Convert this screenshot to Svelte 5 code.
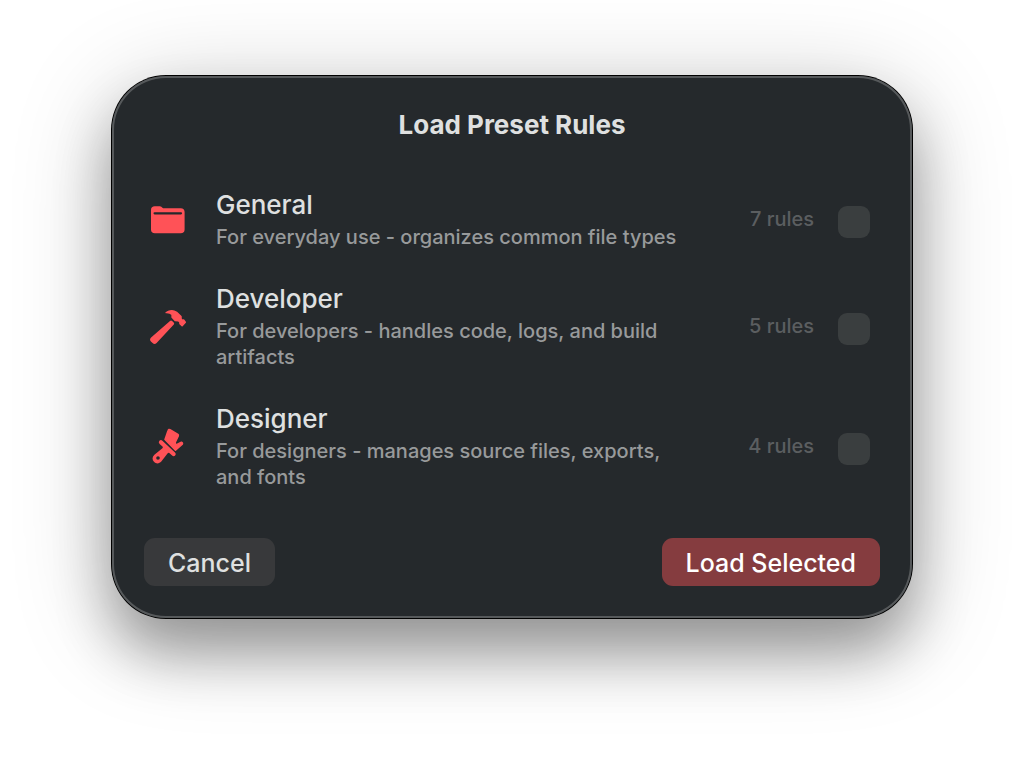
<script>
let presets = $state([
  {
    id: 'general',
    name: 'General',
    description: 'For everyday use - organizes common file types',
    rules: 7,
    selected: false
  },
  {
    id: 'developer',
    name: 'Developer',
    description: 'For developers - handles code, logs, and build artifacts',
    rules: 5,
    selected: false
  },
  {
    id: 'designer',
    name: 'Designer',
    description: 'For designers - manages source files, exports, and fonts',
    rules: 4,
    selected: false
  }
]);
</script>

<main>
  <div class="dialog" role="dialog" aria-labelledby="dialog-title">
    <h1 id="dialog-title">Load Preset Rules</h1>

    <ul>
      {#each presets as preset (preset.id)}
        <li>
          <label for={preset.id}>
            <svg class="icon" width="48" height="48" viewBox="0 0 48 48" aria-hidden="true">
              {#if preset.id === 'general'}
                <path d="M7 15.5V15c0-2.400 1.400-3.700 3.800-3.700h4.100c1.400 0 2.200.3 3.200 1.100l1 .8h17.600c2.500 0 3.900 1.400 3.900 3.800v17.400c0 2.500-1.400 3.800-3.900 3.800H10.900C8.400 38.200 7 36.900 7 34.400z"/>
                <rect class="slot" x="9.500" y="17.200" width="28.600" height="2.200" rx="1.100"/>
              {:else if preset.id === 'developer'}
                <path d="M26 19q1.100-1 2.100 0l1.600 1.600q1 1 .1 2L12.600 40.900q-2 2-4 .2l-1.700-1.700q-1.800-2 .2-4z"/>
                <path class="rounded" d="M22.200 10.600C25.600 8.300 29.600 8.200 32.600 10.400L37 14.600v2.200l1.200 1.400 1.400-.2 1.700 2.200-3.200 3.600-2.100-2-.2-1.900-1.500-1.200-3.200-.2-3-3.200v-2.700C26.800 11.200 24.500 10.500 22.200 10.600z"/>
              {:else}
                <path fill-rule="evenodd" d="M15.400 18.700q1.500-1.400 3 0l12.600 11.700q1.500 1.500.3 2.900-1.500 1.600-3.200.2l-2.800-2.500q-.8-.7-1.600.2L17.300 39.600C15.100 42 12 41.900 10 39.800s-2-5 .4-7.100l8-6.500q1-.8.1-1.600l-2.900-2.700q-1.600-1.600-.2-3.200zM14 34.200a1.800 1.800 0 1 0 0 3.600 1.800 1.800 0 0 0 0-3.600z"/>
                <path class="rounded" d="M24 8.800q.6-2 2.400-1l7.500 4.500q.8.600.4 1.600l-3 6.300q-.4 2.600 1.700 2.200l4.400-2.200q1.600.6.900 2.100l-6.800 6L21 17.500z"/>
              {/if}
            </svg>
            <span class="text">
              <span class="name">{preset.name}</span>
              <span class="description">{preset.description}</span>
            </span>
            <span class="count">{preset.rules} rules</span>
          </label>
          <input type="checkbox" id={preset.id} bind:checked={preset.selected}/>
        </li>
      {/each}
    </ul>

    <footer>
      <button type="button" class="cancel">Cancel</button>
      <button type="button" class="load">Load Selected</button>
    </footer>
  </div>
</main>

<style>
  :global(body) {
    margin: 0;
    background: #fff;
  }

  main {
    display: flex;
    justify-content: center;
    box-sizing: border-box;
    min-height: 100vh;
    padding: 76px 32px 148px;
    overflow: hidden;
    font-family: Inter, "Liberation Sans", sans-serif;
  }

  .dialog {
    box-sizing: border-box;
    width: 100%;
    max-width: 800px;
    align-self: flex-start;
    padding: 32px;
    border-radius: 54px;
    background: #25292c;
    box-shadow:
      inset 0 0 0 2px #56595b,
      0 0 0 1px #000,
      0 36px 56px rgba(0, 0, 0, 0.31),
      0 16px 100px rgba(0, 0, 0, 0.23);
  }

  h1 {
    margin: 0 0 46px;
    color: #dfe0e0;
    font-size: 26px;
    font-weight: 700;
    line-height: 34px;
    text-align: center;
  }

  ul {
    display: flex;
    flex-direction: column;
    gap: 32px;
    margin: 0;
    padding: 0;
    list-style: none;
  }

  li {
    display: flex;
    align-items: center;
    gap: 24px;
    padding-right: 10px;
  }

  label {
    display: flex;
    flex: 1;
    align-items: center;
    gap: 24px;
  }

  .icon {
    flex: none;
    fill: #ff5257;
  }

  .icon .slot {
    fill: #25292c;
  }

  .icon .rounded {
    stroke: #ff5257;
    stroke-width: 1.5;
    stroke-linejoin: round;
  }

  .text {
    display: flex;
    flex: 1;
    flex-direction: column;
    gap: 2px;
  }

  .name {
    color: #dfe0e0;
    font-size: 26px;
    font-weight: 500;
    line-height: 34px;
  }

  .description {
    max-width: 480px;
    color: #989a9b;
    font-size: 20px;
    font-weight: 500;
    line-height: 26px;
  }

  .count {
    flex: none;
    color: #5b5e60;
    font-size: 20px;
    font-weight: 500;
    line-height: 26px;
  }

  input {
    flex: none;
    width: 32px;
    height: 32px;
    margin: 6px 0 0;
    border-radius: 9px;
    background: #3a3e3f;
    appearance: none;
  }

  input:checked {
    background: #ff5257;
  }

  footer {
    display: flex;
    justify-content: space-between;
    margin-top: 48px;
  }

  button {
    height: 48px;
    padding: 2px 24px 0;
    border: 0;
    border-radius: 11px;
    font: inherit;
    font-size: 25px;
    font-weight: 500;
    line-height: 32px;
  }

  .cancel {
    background: #38393b;
    color: #dfe0e0;
  }

  .load {
    background: #853c3f;
    color: #fff;
  }
</style>
